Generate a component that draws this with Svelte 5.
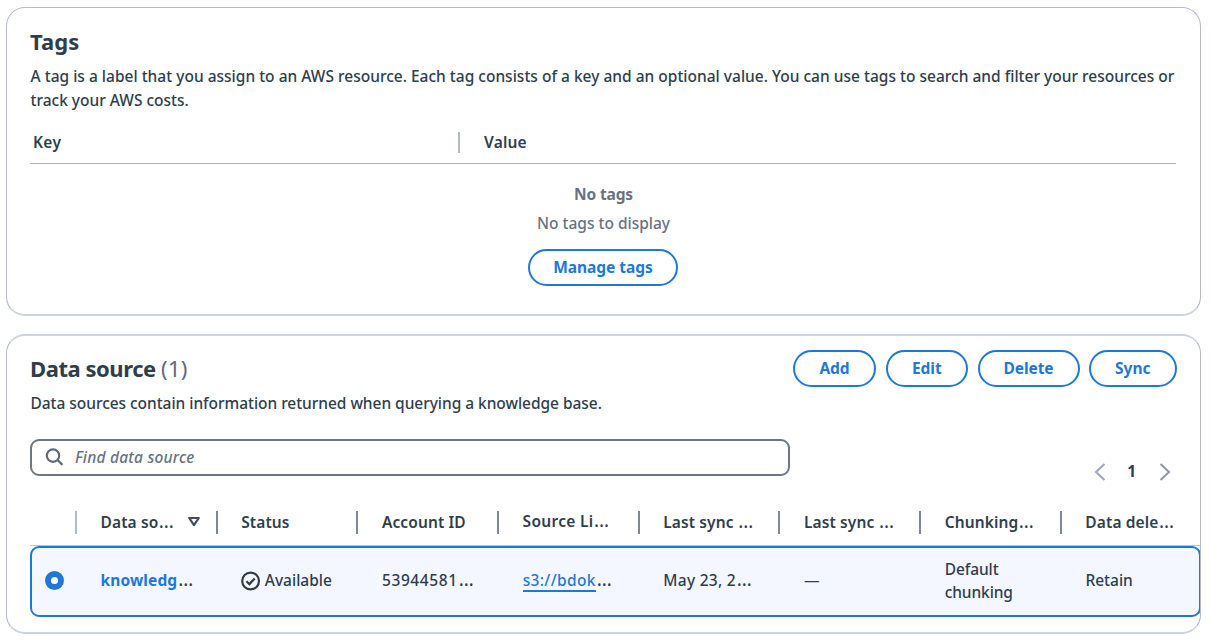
<script>
  const actions = ['Add', 'Edit', 'Delete', 'Sync'];
  const columns = [
    { label: 'Data so', cut: true, sort: true },
    { label: 'Status' },
    { label: 'Account ID' },
    { label: 'Source Li', cut: true, raised: true },
    { label: 'Last sync ', cut: true },
    { label: 'Last sync ', cut: true },
    { label: 'Chunking', cut: true },
    { label: 'Data dele', cut: true }
  ];
</script>

{#snippet more()}<span class="more">…</span>{/snippet}

<main>
  <section class="card tags">
    <h2>Tags</h2>
    <p class="desc"><span class="line first">A tag is a label that you assign to an AWS resource. Each tag consists of a key and an optional value. You can use tags to search and filter your resources or</span> <span class="line">track your AWS costs.</span></p>
    <div class="tag-head">
      <div class="key">Key</div>
      <div class="value">Value</div>
    </div>
    <div class="empty">
      <strong>No tags</strong>
      <span>No tags to display</span>
      <button class="manage">Manage tags</button>
    </div>
  </section>

  <section class="card source">
    <header>
      <h2>Data source <span class="count">(1)</span></h2>
      <div class="actions">
        {#each actions as a}
          <button class={a.toLowerCase()}>{a}</button>
        {/each}
      </div>
    </header>
    <p class="sub">Data sources contain information returned when querying a knowledge base.</p>
    <div class="tools">
      <div class="search">
        <svg width="20" height="20" viewBox="0 0 20 20" fill="none" stroke="#5f6b7a" stroke-width="2.2">
          <circle cx="8" cy="8.600" r="6.200" /><path d="M12.500 13l5 4.900" />
        </svg>
        <em>Find data source</em>
      </div>
      <div class="pager">
        <svg width="12" height="20" viewBox="0 0 12 20" fill="none" stroke="#9ba7b6" stroke-width="2"><path d="M10.500 2L2 10l8.500 8" /></svg>
        <b>1</b>
        <svg width="12" height="20" viewBox="0 0 12 20" fill="none" stroke="#8c98a8" stroke-width="2"><path d="M1.500 2L10 10l-8.500 8" /></svg>
      </div>
    </div>
    <div class="table">
      <div class="row thead">
        <div class="select"></div>
        {#each columns as c}
          <div class="cell" class:raised={c.raised}>
            <span class="label">{c.label}{#if c.cut}{@render more()}{/if}</span>
            {#if c.sort}
              <svg width="14" height="12" viewBox="0 0 14 12" fill="none" stroke="#414d5c" stroke-width="2.200" stroke-linejoin="round"><path d="M2.200 2h9.600L7 9.200z" /></svg>
            {/if}
          </div>
        {/each}
      </div>
      <div class="row body">
        <div class="select"><i class="radio"></i></div>
        <div class="cell"><span class="name"><b>knowledg</b>{@render more()}</span></div>
        <div class="cell status">
          <svg width="20" height="20" viewBox="0 0 20 20" fill="none" stroke="#2f3e4a" stroke-width="2.200"><circle cx="9.600" cy="10" r="8.400" /><path d="M5.400 10.200l3 2.900 5.300-5.700" /></svg>
          <span>Available</span>
        </div>
        <div class="cell"><span class="acct">53944581{@render more()}</span></div>
        <div class="cell"><span class="uri"><a href="#top">s3://bdok</a>{@render more()}</span></div>
        <div class="cell"><span class="date">May 23, 2{@render more()}</span></div>
        <div class="cell"><span class="dash">—</span></div>
        <div class="cell"><span class="chunk">Default<br />chunking</span></div>
        <div class="cell"><span>Retain</span></div>
      </div>
    </div>
  </section>
</main>

<style>
  :global(body) { background: #fff; }
  main {
    width: 1210px; height: 642px; box-sizing: border-box; padding: 7px 9px 0 6px; overflow: hidden;
    font-family: "Noto Sans", "Open Sans", sans-serif; font-size: 15.500px; line-height: 23.500px; color: #2f3e4a;
    font-weight: 500; letter-spacing: 0;
  }
  * { box-sizing: border-box; }
  .card { border: 1px solid #b0bccd; border-bottom: 2px solid #ccd4df; border-radius: 19px; background: #fff; }
  .tags { height: 309px; padding: 20px 24px 0 23px; }
  .source { height: 300px; margin-top: 18px; padding: 14px 0 0 23px; border-top: 2px solid #ccd4df; overflow: hidden; }
  h2 { margin: 0; font-size: 22px; line-height: 26px; font-weight: 700; white-space: nowrap; letter-spacing: -0.450px; }
  .tags h2 { letter-spacing: 0.1px; }
  .count { font-weight: 400; color: #5f6b7a; letter-spacing: 0.300px; }
  p { margin: 0; white-space: nowrap; }
  .desc { margin-top: 11px; padding-left: 0.500px; }
  .first { letter-spacing: 0.008px; }
  .line { display: block; }
  .tag-head { display: flex; align-items: center; height: 42px; margin-top: 10px; padding-left: 3px; border-bottom: 1px solid #a9b6ca; font-weight: 600; }
  .key { width: 425px; letter-spacing: 0.300px; }
  .value { border-left: 2px solid #aebacb; height: 21px; line-height: 21px; padding-left: 24px; letter-spacing: 0.200px; }
  .empty { display: flex; flex-direction: column; align-items: center; color: #68737f; padding-top: 19px; margin-right: -1px; }
  .empty span { margin-top: 5px; }
  .empty strong { letter-spacing: -0.150px; }
  button {
    height: 37px; padding: 0 0 2px; border: 2px solid #1f78d8; border-radius: 19px; background: #fff; color: #1f78d8;
    font: 700 15.500px/30px "Noto Sans", "Open Sans", sans-serif; letter-spacing: -0.050px;
  }
  .manage { width: 150px; margin-top: 14px; margin-right: 1px; }
  header { display: flex; justify-content: space-between; height: 37px; margin-right: 23.500px; }
  header h2 { line-height: 36px; }
  .actions { display: flex; gap: 9.500px; }
  .add { width: 83px; } .edit { width: 82.500px; } .delete { width: 102px; } .sync { width: 87.500px; }
  .sub { margin-top: 5px; padding-left: 0.500px; letter-spacing: -0.040px; }
  .tools { display: flex; justify-content: space-between; margin-top: 23px; height: 37px; padding-right: 29px; }
  .search { width: 760px; border: 2px solid #6c7786; border-radius: 9px; display: flex; align-items: center; gap: 10px; padding-left: 13px; color: #68737f; }
  .search em { letter-spacing: 0.200px; position: relative; top: 1px; }
  .pager { display: flex; align-items: center; gap: 22px; padding-top: 29px; }
  .pager b { margin: 0 1px 0 -1px; }
  .table { margin-top: 24px; }
  .row { display: flex; align-items: center; }
  .thead { height: 46px; font-weight: 600; border-bottom: 1px solid #b9c4d2; }
  .select { flex: 0 0 45px; }
  .thead .cell { height: 23px; border-left: 2px solid #7d8998; padding-left: 23.500px; }
  .thead .cell:nth-child(2) { border-color: #b0bccd; }
  .label { position: relative; top: 1px; white-space: pre; letter-spacing: 0.120px; }
  .raised .label { top: 0; letter-spacing: 0.300px; }
  .cell { flex: 0 0 140.700px; padding-left: 25.600px; display: flex; align-items: center; white-space: nowrap; }
  .more { font-size: 19px; line-height: 0; font-weight: 400; letter-spacing: 0; margin-left: 0.500px; }
  .body .more { margin-left: 1px; }
  .thead svg { margin-left: 13px; }
  .body { height: 71px; background: #f4f7ff; border: 2px solid #1f78d8; border-radius: 9px; margin-right: -1px; }
  .body .select { flex-basis: 43px; }
  .radio { display: block; width: 19px; height: 19px; border: 6px solid #1f78d8; border-radius: 50%; background: #fff; margin-left: 13px; position: relative; top: -1px; }
  .name b, a { color: #1f78d8; }
  .name b { letter-spacing: 0.100px; }
  .status { gap: 3.500px; }
  .acct { letter-spacing: 0.600px; }
  .date { letter-spacing: 0.250px; }
  .chunk { letter-spacing: -0.100px; }
  a { text-decoration: none; border-bottom: 2px solid #1f78d8; letter-spacing: 0.350px; }
  .uri { line-height: 20px; }
  .uri a { display: inline-block; }
</style>
